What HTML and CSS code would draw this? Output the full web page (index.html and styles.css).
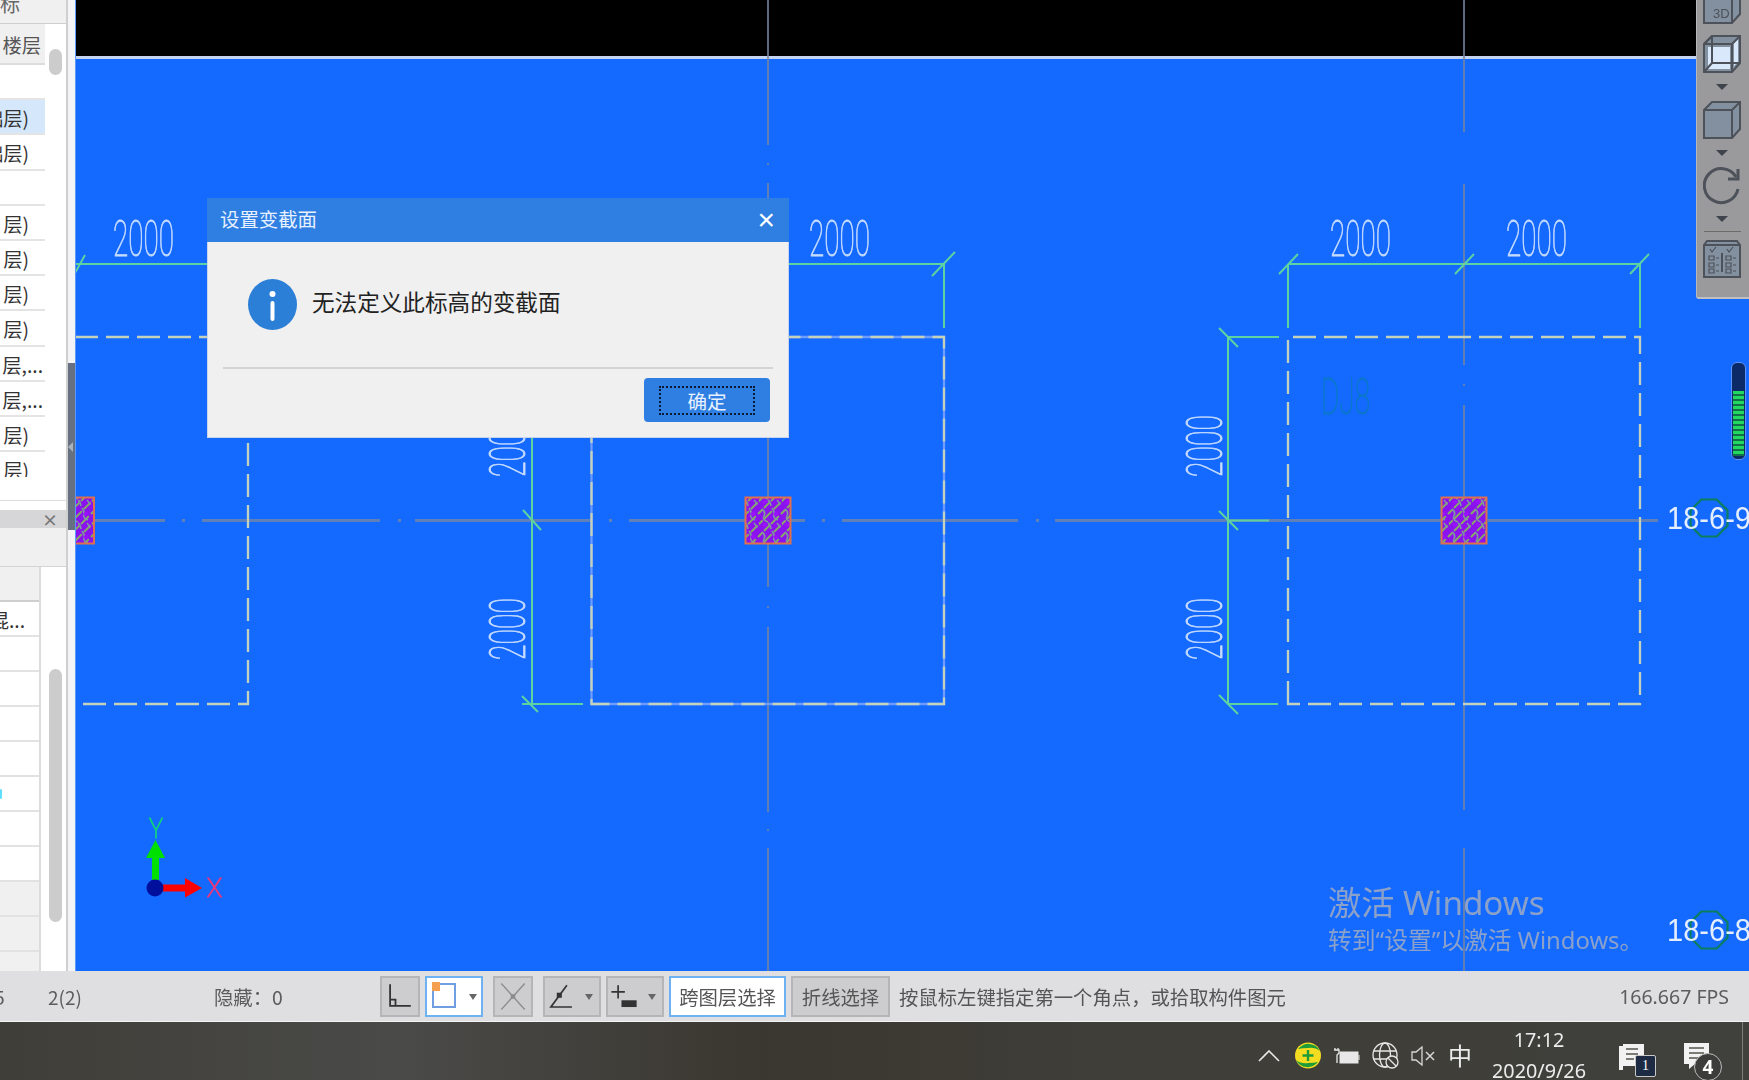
FILE: index.html
```html
<!DOCTYPE html>
<html lang="zh-CN">
<head>
<meta charset="utf-8">
<title>设置变截面</title>
<link rel="stylesheet" href="styles.css">
</head>
<body>
<div class="app">
  <div class="main">
    <aside class="side">
      <div class="panel">
        <div class="floor-head"><span class="floor-title">标</span></div>
        <div class="floor-wrap">
          <div class="floor-list">
            <div class="row grey"><span class="t e1">楼层</span></div>
            <div class="row"></div>
            <div class="row sel"><span class="t">础层)</span></div>
            <div class="row"><span class="t">础层)</span></div>
            <div class="row"></div>
            <div class="row"><span class="t">层)</span></div>
            <div class="row"><span class="t">层)</span></div>
            <div class="row"><span class="t">层)</span></div>
            <div class="row"><span class="t">层)</span></div>
            <div class="row"><span class="t e2">层,...</span></div>
            <div class="row"><span class="t e2">层,...</span></div>
            <div class="row"><span class="t">层)</span></div>
            <div class="row last"><span class="t">层)</span></div>
          </div>
          <div class="thumb thumb-a"></div>
        </div>
        <div class="sub-bar"><span class="sub-x">×</span></div>
        <div class="sub-gap"></div>
        <div class="prop-wrap">
          <div class="prop-list">
            <div class="prow head"></div>
            <div class="prow"><span class="pt">混...</span></div>
            <div class="prow"></div>
            <div class="prow"></div>
            <div class="prow"></div>
            <div class="prow"></div>
            <div class="prow"><i class="dot"></i></div>
            <div class="prow"></div>
            <div class="prow"></div>
            <div class="prow grey"></div>
            <div class="prow grey"></div>
            <div class="prow grey"></div>
          </div>
          <div class="thumb thumb-b"></div>
        </div>
      </div>
      <div class="splitter"><div class="grip"><i class="grip-arrow"></i></div></div>
    </aside>

    <section class="canvas">
      <div class="band"></div>
      <div class="band-line"></div>
      <div class="blue"></div>

      <svg class="drawing" viewBox="75 0 1674 971" width="1674" height="971" xmlns="http://www.w3.org/2000/svg">
        <defs>
          <pattern id="hatch" width="23" height="23" patternUnits="userSpaceOnUse">
            <rect width="23" height="23" fill="#8a12ee"/>
            <path d="M-2 9L9 -2M-2 20L20 -2M5 25L25 5M16 25L25 16" stroke="#86a868" stroke-width="2" stroke-dasharray="8 2 11 3" fill="none"/>
            <path d="M3 3Q7 6 5 10T9 16M13 2Q16 6 15 9T19 14M9 17Q12 19 12 25M18 17Q20 19 21 22" stroke="#7f98a0" stroke-width="1.600" fill="none"/>
            <ellipse cx="6" cy="19" rx="2.500" ry="2" fill="#9a10ff"/>
            <ellipse cx="17" cy="8" rx="2.500" ry="2" fill="#9a10ff"/>
          </pattern>
        </defs>

        <g class="grid">
          <path d="M768 0V145M768 163V165M768 183V587M768 606V608M768 627V812M768 829V831M768 848V971"/>
          <path d="M1464 0V132M1464 184V365M1464 384V386M1464 405V810M1464 848V971"/>
          <path class="gridh" d="M95 520.5H165M182 520.5H185M202 520.5H380M398 520.5H401M415 520.5H591M609 520.5H612M629 520.5H745M791 520.5H805M822 520.5H825M842 520.5H1018M1036 520.5H1039M1055 520.5H1441M1488 520.5H1658"/>
        </g>

        <g class="dash">
          <path d="M75 337H248V704H75"/>
          <path d="M1288 704V337H1640V704Z"/>
        </g>
        <path class="under" d="M591.5 337H944V704H591.5Z"/>
        <path class="dash" d="M591.5 337H944V704H591.5Z"/>

        <g class="dim">
          <path d="M75 264H207M789 264H944V328"/>
          <path d="M932 276L955 252M75 273L85 255"/>
          <path d="M532 437V704M522 696L538 712M523 510L541 530M522 704H583"/>
          <path d="M1288 264H1640M1288 264V328M1640 264V328"/>
          <path d="M1279 274L1298 254M1455 274L1474 254M1630 274L1649 254"/>
          <path d="M1228 337V704M1219 328L1238 347M1219 511L1238 530M1219 695L1238 714"/>
          <path d="M1228 337H1279M1228 704H1278M1228 520.5H1269"/>
        </g>

        <g class="col">
          <rect x="49" y="497.5" width="45" height="46"/>
          <rect x="745.5" y="497.5" width="45" height="46"/>
          <rect x="1441.5" y="497.5" width="45" height="46"/>
        </g>

        <g class="cad">
          <text x="113" y="256" textLength="61" lengthAdjust="spacingAndGlyphs">2000</text>
          <text x="809" y="256" textLength="61" lengthAdjust="spacingAndGlyphs">2000</text>
          <text x="1330" y="256" textLength="61" lengthAdjust="spacingAndGlyphs">2000</text>
          <text x="1506" y="256" textLength="61" lengthAdjust="spacingAndGlyphs">2000</text>
          <text transform="translate(1222 477) rotate(-90)" textLength="62" lengthAdjust="spacingAndGlyphs">2000</text>
          <text transform="translate(1222 660) rotate(-90)" textLength="62" lengthAdjust="spacingAndGlyphs">2000</text>
          <text transform="translate(525 660) rotate(-90)" textLength="62" lengthAdjust="spacingAndGlyphs">2000</text>
          <text transform="translate(525 477) rotate(-90)" textLength="62" lengthAdjust="spacingAndGlyphs">2000</text>
          <text class="dj" x="1321" y="414" textLength="49" lengthAdjust="spacingAndGlyphs">DJ8</text>
        </g>

        <g class="axis-ring">
          <path d="M1701.300 499.500L1716.700 499.500L1727.500 510.300L1727.500 525.700L1716.700 536.500L1701.300 536.500L1690.500 525.700L1690.500 510.300Z"/>
          <path d="M1701.300 911.500L1716.700 911.500L1727.500 922.300L1727.500 937.700L1716.700 948.500L1701.300 948.500L1690.500 937.700L1690.500 922.300Z"/>
        </g>
        <text class="axis-label" x="1667" y="529" textLength="84" lengthAdjust="spacingAndGlyphs">18-6-9</text>
        <text class="axis-label" x="1667" y="941" textLength="84" lengthAdjust="spacingAndGlyphs">18-6-8</text>

        <path fill="#00e000" d="M152 880V858H146L155.500 840L165 858H159V880Z"/>
        <path fill="#ff0000" d="M160 884.500H185V878L202 888L185 897.500V891.500H160Z"/>
        <circle cx="155" cy="888" r="8.500" fill="#00109c"/>
        <text class="axis-y" x="149" y="838" textLength="14" lengthAdjust="spacingAndGlyphs">Y</text>
        <text class="axis-x" x="207" y="897" textLength="15" lengthAdjust="spacingAndGlyphs">X</text>
      </svg>

      <div class="activate">
        <div class="act1">激活 Windows</div>
        <div class="act2">转到“设置”以激活 Windows。</div>
      </div>

      <div class="tools">
        <svg class="ti ti-top" viewBox="0 0 38 38" width="38" height="38"><path class="f" d="M1 10L9 1H37V28L29 37H1Z"/><path class="s" d="M1 10H29V37M29 10L37 1"/><text x="10" y="32" class="ti-text">3D</text></svg>
        <svg class="ti" viewBox="0 0 38 38" width="38" height="38"><path class="f" d="M1 9L9 1H37V28L29 37H1Z"/><path class="lt" d="M5 12H27V27L27 34H5Z"/><path class="lt" d="M31 8L35 4V27L31 31Z"/><path class="s" d="M1 9H29V37M29 9L37 1M9 1V28H37M9 28L1 37M1 9L9 1"/></svg>
        <i class="tri"></i>
        <svg class="ti" viewBox="0 0 38 38" width="38" height="38"><path class="f" d="M1 9L9 1H37V28L29 37H1Z"/><path class="s" d="M1 9H29V37M29 9L37 1"/></svg>
        <i class="tri"></i>
        <svg class="ti" viewBox="0 0 38 38" width="38" height="38"><path class="arc" d="M33 10A17 17 0 1 0 35 22"/><path class="arc" d="M35 2V12H25"/></svg>
        <i class="tri"></i>
        <div class="tool-line"></div>
        <svg class="ti" viewBox="0 0 38 38" width="38" height="38"><path class="f" d="M1 5L4 1H34L37 5V37H1Z"/><path class="s" d="M1 5H37M19 13V32"/><path class="m" d="M7 9L9 12L13 7M24 9L26 12L30 7"/><path class="m" d="M6 16h5v4h-5zM6 23h5v4h-5zM6 29h5v4h-5zM23 16h5v4h-5zM23 23h5v4h-5zM23 29h5v4h-5zM13 18h3M13 25h3M13 31h3M30 18h3M30 25h3M30 31h3"/></svg>
      </div>

      <div class="meter"><div class="meter-fill"></div></div>

      <div class="dialog">
        <div class="dlg-title"><span class="dlg-name">设置变截面</span><span class="dlg-x">×</span></div>
        <div class="dlg-body">
          <svg class="dlg-icon" viewBox="0 0 49 51" width="49" height="51"><ellipse cx="24.500" cy="25.500" rx="24.500" ry="25.500" fill="#2b7fd6"/><circle cx="24.500" cy="15" r="3" fill="#fff"/><rect x="22.500" y="22" width="4" height="20" rx="2" fill="#fff"/></svg>
          <span class="dlg-msg">无法定义此标高的变截面</span>
        </div>
        <div class="dlg-rule"></div>
        <div class="dlg-foot"><button class="dlg-btn"><span class="dlg-btn-in">确定</span></button></div>
      </div>
    </section>
  </div>

  <footer class="status">
    <span class="c1">5</span>
    <span class="c2">2(2)</span>
    <span class="c3">隐藏：0</span>
    <div class="btn b-s"><svg viewBox="0 0 40 41" width="36" height="37"><path class="bi" d="M9 7V31H32M9 24H15V31"/></svg></div>
    <div class="btn b-m on"><svg viewBox="0 0 38 37" width="38" height="37"><rect x="6" y="6" width="22" height="23" fill="#fff" stroke="#6f9fe0" stroke-width="2"/><rect x="5" y="4" width="8" height="9" fill="#f5a050"/></svg><i class="dd dd-near"></i></div>
    <div class="btn b-s b-x"><svg viewBox="0 0 40 41" width="36" height="37"><path d="M7 6L33 35M33 6L7 35" stroke="#8c8c8c" stroke-width="1.500" fill="none"/><rect x="17.500" y="18" width="5" height="5" fill="#8c8c8c"/></svg></div>
    <div class="btn b-m"><svg viewBox="0 0 38 41" width="32" height="37"><path class="bi" d="M26 7L7 33H32"/><rect x="14" y="16" width="6" height="6" fill="#333"/></svg><i class="dd"></i></div>
    <div class="btn b-m"><svg viewBox="0 0 38 41" width="32" height="37"><path class="bi" d="M4 15H20M12 7V23"/><rect x="16" y="25" width="18" height="8" fill="#333"/></svg><i class="dd"></i></div>
    <div class="btn b-t on wide">跨图层选择</div>
    <div class="btn b-t narrow">折线选择</div>
    <span class="hint">按鼠标左键指定第一个角点，或拾取构件图元</span>
    <span class="fps">166.667 FPS</span>
  </footer>

  <div class="taskbar">
    <svg class="tb chev" viewBox="0 0 22 12" width="22" height="12"><path d="M1 11L11 1L21 11" fill="none" stroke="#e8e8e8" stroke-width="1.600"/></svg>
    <svg class="tb safe" viewBox="0 0 26 27" width="26" height="27"><circle cx="13" cy="13.500" r="13" fill="#f4dc20"/><path d="M3 7A13 13 0 0 1 25 9Q20 5 13 6Q7 6 3 7ZM23 20A13 13 0 0 1 1 18Q6 22 13 21Q19 21 23 20Z" fill="#1f9c3a"/><path d="M13 8V19M7.500 13.500H18.500" stroke="#1f9c3a" stroke-width="2.400"/></svg>
    <svg class="tb batt" viewBox="0 0 26 18" width="26" height="18"><rect x="6" y="5" width="18" height="11" fill="#e8e8e8" stroke="#e8e8e8"/><path d="M25 8V13" stroke="#e8e8e8"/><path d="M1 1V3M4 1V3M0 3H5V6L3 8V16" fill="none" stroke="#e8e8e8" stroke-width="1.300"/></svg>
    <svg class="tb globe" viewBox="0 0 27 27" width="27" height="27"><g fill="none" stroke="#e8e8e8" stroke-width="1.300"><circle cx="13" cy="13" r="12"/><ellipse cx="13" cy="13" rx="5.500" ry="12"/><path d="M2 9H24M2 17H24"/></g><circle cx="20" cy="20" r="6" fill="#3f3e38" stroke="#e8e8e8" stroke-width="1.300"/><path d="M16 16L24 24" stroke="#e8e8e8" stroke-width="1.300"/></svg>
    <svg class="tb spk" viewBox="0 0 24 20" width="24" height="20"><path d="M1 6H5L11 1V19L5 14H1Z" fill="none" stroke="#d8d8d8" stroke-width="1.300"/><path d="M15 6L23 14M23 6L15 14" stroke="#d8d8d8" stroke-width="1.500"/></svg>
    <span class="tb ime">中</span>
    <div class="tb clock"><div>17:12</div><div>2020/9/26</div></div>
    <div class="tb nt1">
      <svg viewBox="0 0 37 36" width="37" height="36"><path d="M1 4H5V2H26V24H5V28H1Z" fill="#f2f2f2"/><path d="M8 7H20M8 12H20M8 17H16" stroke="#55554f" stroke-width="1.500"/></svg>
      <span class="nt1-badge">1</span>
    </div>
    <div class="tb nt2">
      <svg viewBox="0 0 39 36" width="39" height="36"><path d="M1 1H26V22H12L6 27V22H1Z" fill="#f2f2f2"/><path d="M6 6H21M6 11H21M6 16H16" stroke="#55554f" stroke-width="1.500"/></svg>
      <span class="nt2-badge">4</span>
    </div>
    <i class="tb edge"></i>
  </div>
</div>
</body>
</html>
```

FILE: styles.css
```css
* { box-sizing: border-box; }
html, body { margin: 0; padding: 0; background: #3f3e38; }
body { width: 1749px; height: 1080px; overflow: hidden; font-family: "Noto Sans CJK SC", "Noto Sans", sans-serif; }
.app { width: 1749px; height: 1080px; display: flex; flex-direction: column; filter: blur(.45px); }
.main { height: 971px; display: flex; flex: none; }

/* left side */
.side { width: 75px; display: flex; flex: none; }
.panel { width: 68px; background: #fff; border-right: 2px solid #cfcfcf; display: flex; flex-direction: column; overflow: hidden; }
.floor-head { height: 24px; background: #f0f0f0; border-bottom: 1px solid #cfcfcf; overflow: hidden; display: flex; justify-content: flex-end; padding-right: 46px; }
.floor-title { font-size: 20px; line-height: 8px; color: #666; white-space: nowrap; }
.floor-wrap { height: 477px; display: flex; border-bottom: 1px solid #ddd; }
.floor-list { width: 45px; height: 454px; overflow: hidden; flex: none; }
.row { height: 35.200px; border-bottom: 2px solid #e4e4e4; display: flex; justify-content: flex-end; align-items: center; padding-right: 16px; white-space: nowrap; }
.row:first-child { height: 41px; border-bottom-color: #ddd; padding-right: 4px; }
.row.grey { background: #f0f0f0; }
.row.sel { background: #d5e8fb; }
.row.last { border-bottom: 0; height: 25px; align-items: flex-start; overflow: hidden; padding-top: 4px; }
.t { font-size: 19.300px; line-height: 28px; color: #333; margin-top: 3px; }
.row.last .t { margin-top: 0; }
.t.e1 { color: #555; }
.t.e2 { margin-right: -14px; }
.thumb { width: 13px; background: #cccccc; border-radius: 7px; margin-left: 4px; flex: none; }
.thumb-a { height: 26px; margin-top: 25px; }
.sub-bar { height: 18px; margin-top: 9px; background: #d6d6d9; display: flex; justify-content: flex-end; align-items: center; padding-right: 8px; flex: none; }
.sub-x { font-size: 16px; line-height: 18px; font-weight: 700; color: #777; }
.sub-gap { height: 39px; background: #f0f0f0; border-bottom: 1px solid #d4d4d4; flex: none; }
.prop-wrap { flex: 1; display: flex; min-height: 0; }
.prop-list { width: 41px; flex: none; border-right: 2px solid #dcdcdc; overflow: hidden; }
.prow { height: 35px; border-bottom: 2px solid #e2e2e2; display: flex; justify-content: flex-end; align-items: center; padding-right: 14px; white-space: nowrap; }
.prow.head { background: #f0f0f0; border-bottom: 2px solid #cfcfcf; }
.prow.grey { background: #f0f0f0; }
.pt { font-size: 19.300px; color: #333; padding-top: 3px; }
.dot { width: 3px; height: 10px; background: #60e0ff; border-radius: 2px; margin-right: auto; margin-left: -1px; }
.thumb-b { height: 253px; margin-top: 102px; margin-left: 8px; }
.splitter { width: 7px; background: #f4f4f6; padding-top: 363px; }
.grip { width: 7px; height: 167px; background: #667080; display: flex; align-items: center; }
.grip-arrow { border-right: 5px solid #a9b1bc; border-top: 5px solid transparent; border-bottom: 5px solid transparent; }

/* canvas */
.canvas { position: relative; flex: 1; display: flex; flex-direction: column; border-left: 1px solid #5a98ff; overflow: hidden; }
.band { height: 56px; background: #000; flex: none; }
.band-line { height: 3px; background: #c4d4f0; flex: none; }
.blue { flex: 1; background: #1469ff; }
.drawing { position: absolute; left: -1px; top: 0; }
.grid path { fill: none; stroke: #75859f; stroke-width: 1.600; }
.grid .gridh { stroke-width: 3; stroke: #5f80b8; }
.dash { fill: none; stroke: #c4d2bc; stroke-width: 2.300; stroke-dasharray: 23 8; }
.dash path { fill: none; }
.under { fill: none; stroke: #6f9cff; stroke-width: 2.300; }
.dim path { fill: none; stroke: #5ed2a0; stroke-width: 2; }
.col rect { fill: url(#hatch); stroke: #e0704c; stroke-width: 2; }
.cad text { font-family: Roboto, "Liberation Sans", sans-serif; font-weight: 100; font-size: 50px; fill: #c6dcff; stroke: #c6dcff; stroke-width: .9; }
.cad .dj { fill: #0a78c8; stroke: #0a78c8; }
.axis-ring path { fill: none; stroke: #0a7e5e; stroke-width: 2.200; }
.axis-label { font-family: "Liberation Sans", sans-serif; font-size: 32px; fill: #f2f7ff; fill-opacity: .94; }
.axis-y { font-family: Roboto, "Liberation Sans", sans-serif; font-weight: 100; font-size: 28px; fill: #10d080; stroke: #10d080; stroke-width: 1.200; }
.axis-x { font-family: Roboto, "Liberation Sans", sans-serif; font-weight: 100; font-size: 26px; fill: #e83878; stroke: #e83878; stroke-width: 1.200; }

.activate { position: absolute; left: 1252px; top: 880px; color: #98a8c4; opacity: .9; white-space: nowrap; font-family: "Noto Sans", "Noto Sans CJK SC", sans-serif; }
.act1 { font-size: 33.200px; line-height: 45px; }
.act2 { font-size: 23.800px; line-height: 30px; }

.tools { position: absolute; right: 0; top: 0; width: 53px; height: 299px; background: #9a9a9c; border-radius: 0 0 0 3px; border-left: 1px solid #b8b8b8; border-bottom: 2px solid #c0c0c0; display: flex; flex-direction: column; align-items: center; padding-right: 2px; }
.ti { flex: none; display: block; }
.ti-top { margin-top: -14px; }
.ti + .ti, .ti-top + .ti { margin-top: 11px; }
.ti .f { fill: #83909f; stroke: #4d5159; stroke-width: 2; }
.ti .s { fill: none; stroke: #4d5159; stroke-width: 2; }
.ti .lt { fill: #d9e8fb; }
.ti .arc { fill: none; stroke: #4d5159; stroke-width: 3; }
.ti .m { fill: none; stroke: #4d5159; stroke-width: 1.200; }
.ti-text { font-family: "Liberation Sans", sans-serif; font-size: 13px; fill: #4d5159; }
.tri { flex: none; width: 0; height: 0; margin: 11px 0; border-left: 6px solid transparent; border-right: 6px solid transparent; border-top: 6px solid #3f444c; }
.tool-line { flex: none; width: 37px; height: 1px; background: #6e6a68; margin: -2px 0 8px; }

.meter { position: absolute; left: 1655px; top: 362px; width: 15px; height: 98px; background: #0c2a68; border: 1px solid #5d93f5; border-radius: 6px; padding: 28px 1px 3px; }
.meter-fill { height: 100%; background: repeating-linear-gradient(to bottom, #22d860 0 3px, #127048 3px 5px); }

/* dialog */
.dialog { position: absolute; left: 131px; top: 198px; width: 582px; height: 240px; background: #f0f0f0; border: 1px solid #c7d4ea; border-top: 0; display: flex; flex-direction: column; }
.dlg-title { height: 44px; flex: none; margin: 0 -1px; background: #2e7fe1; color: #e8f1ff; font-size: 19.400px; display: flex; justify-content: space-between; align-items: center; padding: 0 14px 0 13px; }
.dlg-name { margin-top: -3px; }
.dlg-x { font-size: 30px; line-height: 30px; color: #fff; font-family: "Liberation Sans", sans-serif; }
.dlg-body { height: 125px; display: flex; align-items: center; padding-left: 40px; }
.dlg-icon { flex: none; }
.dlg-msg { margin: -6px 0 0 15px; font-size: 22.600px; color: #222; white-space: nowrap; }
.dlg-rule { height: 2px; margin: 0 15px; background: #d4d4d8; flex: none; }
.dlg-foot { display: flex; justify-content: flex-end; padding: 9px 18px 0 0; }
.dlg-btn { width: 126px; height: 44px; padding: 8px 15px 7px; background: #2e7fe1; border: 0; border-radius: 4px; display: flex; }
.dlg-btn-in { flex: 1; border: 2px dotted #0b1a30; color: #e8f1ff; font: 19.600px/25px "Noto Sans CJK SC", sans-serif; text-align: center; }

/* status */
.status { height: 51px; flex: none; background: #dfdfe2; border-bottom: 1px solid #f4f4f4; display: flex; align-items: center; padding-top: 1px; color: #5c5c5c; font-size: 19.350px; white-space: nowrap; }
.c1 { width: 48px; flex: none; margin-left: -6px; margin-right: 6px; }
.c2 { width: 166px; flex: none; font-size: 19px; }
.c3 { width: 166px; flex: none; }
.btn { height: 41px; flex: none; background: #cdcdcf; border: 2px solid #b5b5b7; display: flex; align-items: center; justify-content: center; margin-right: 5px; }
.btn.on { background: #fff; border-color: #6db2f2; }
.b-s { width: 40px; }
.b-m { width: 58px; justify-content: flex-start; position: relative; }
.b-x { margin-left: 5px; margin-right: 10px; }
.b-t { color: #555; font-size: 19.350px; }
.wide { width: 117px; }
.narrow { width: 99px; margin-right: 9px; }
.dd { width: 0; height: 0; margin-left: 8px; border-left: 4px solid transparent; border-right: 4px solid transparent; border-top: 6px solid #666; }
.dd-near { margin-left: 4px; }
.bi { fill: none; stroke: #333; stroke-width: 2; }
.hint { color: #555; }
.fps { margin-left: auto; padding-right: 20px; font-family: "Noto Sans", sans-serif; font-size: 19.500px; }

/* taskbar */
.taskbar { height: 58px; flex: none; display: flex; align-items: flex-start; padding-left: 1258px; color: #ececec; overflow: hidden; background: linear-gradient(90deg, #3f3e38 0, #4a4a48 400px, #3a3730 760px, #3f3e38 1100px, #40403c 100%); }
.tb { flex: none; }
.chev { margin-top: 28px; }
.safe { margin: 20px 0 0 15px; }
.batt { margin: 25px 0 0 13px; }
.globe { margin: 20px 0 0 12px; }
.spk { margin: 24px 0 0 12px; }
.ime { margin: 16px 0 0 13px; font-size: 24px; line-height: 34px; }
.clock { margin: 2px 0 0 19px; width: 96px; text-align: center; font-family: "Noto Sans", sans-serif; font-size: 19.800px; line-height: 31px; }
.nt1, .nt2 { position: relative; height: 50px; }
.nt1 { margin: 20px 0 0 31px; width: 37px; }
.nt2 { margin: 20px 0 0 28px; width: 39px; }
.nt1-badge { position: absolute; left: 17px; top: 13px; width: 21px; height: 22px; background: #1c2a44; border: 1px solid #c8c8c8; border-radius: 2px; font: 14px/20px "Liberation Serif", serif; text-align: center; color: #fff; }
.nt2-badge { position: absolute; left: 11px; top: 11px; width: 28px; height: 28px; background: #3c3c3a; border: 1px solid #bbb; border-radius: 50%; font: 700 19px/26px "Noto Sans", sans-serif; text-align: center; color: #fff; }
.edge { width: 1px; height: 58px; margin-left: 20px; background: #7c7c78; }
```
